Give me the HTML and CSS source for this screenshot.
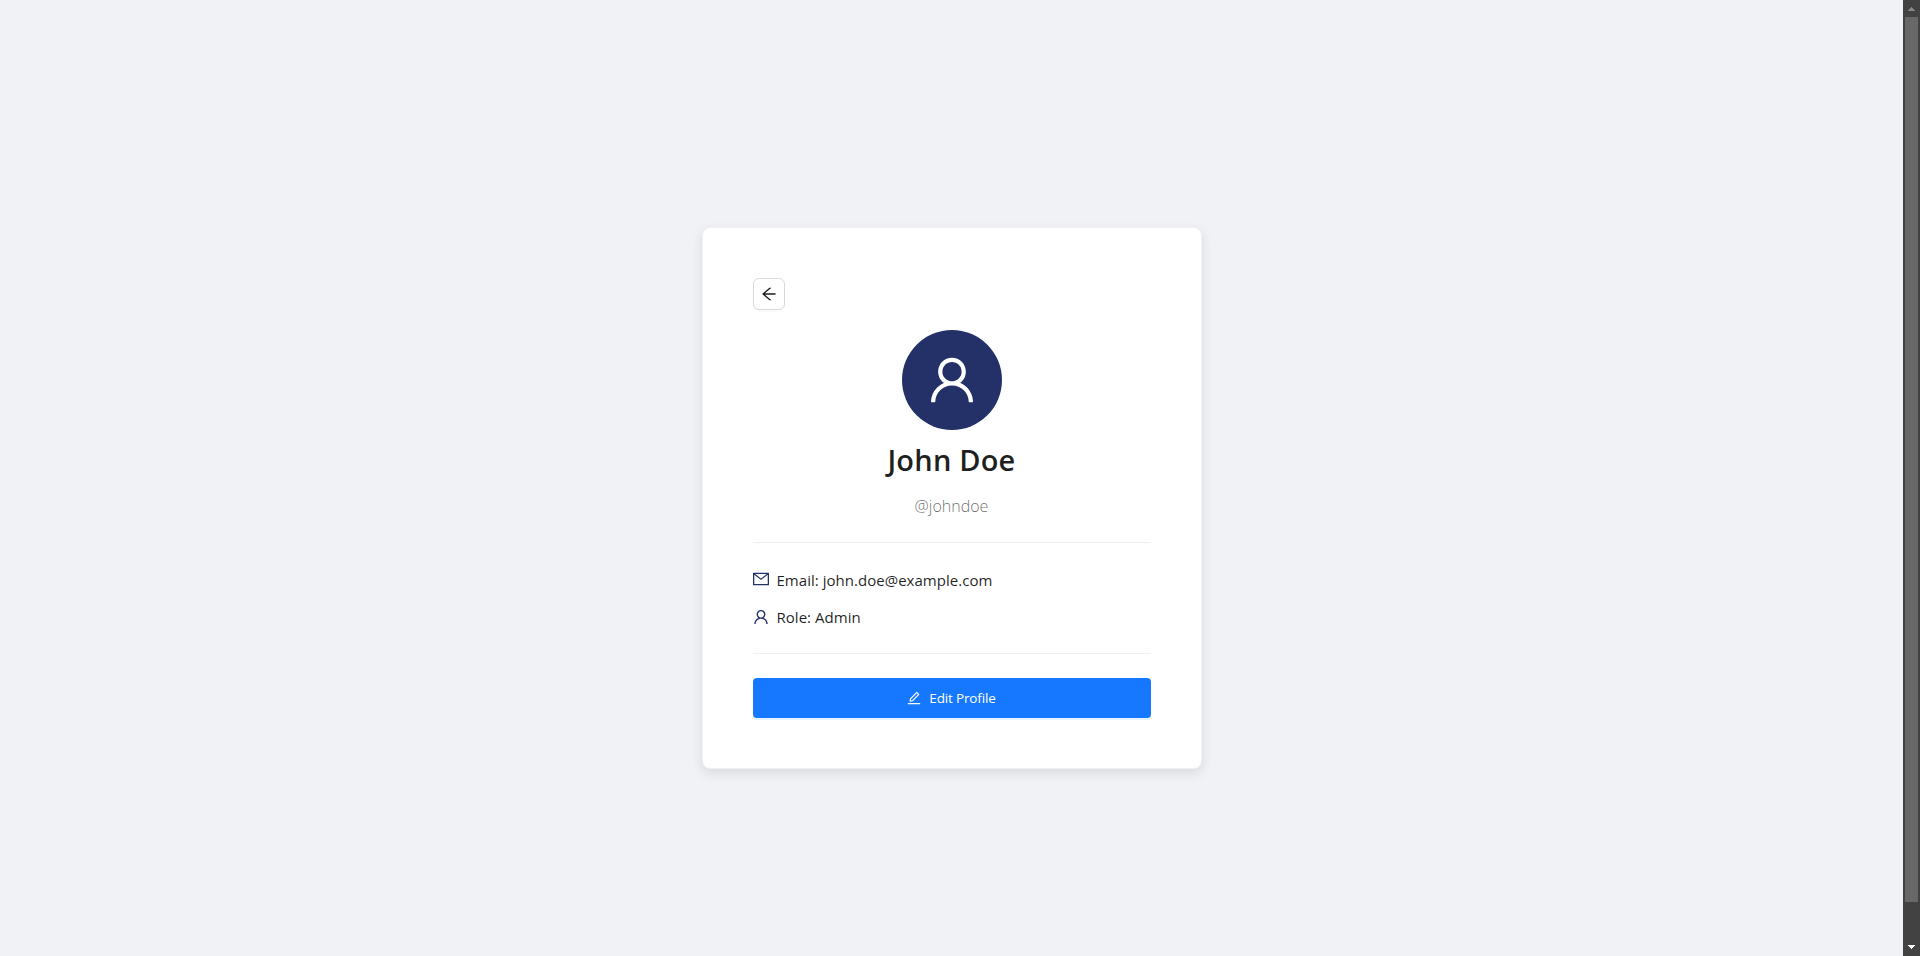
FILE: index.html
```html
<!DOCTYPE html>
<html lang="en">
<head>
<meta charset="utf-8">
<title>Profile</title>
<link rel="stylesheet" href="styles.css">
</head>
<body>
<svg class="sprite" aria-hidden="true">
  <symbol id="user" viewBox="64 64 896 896"><path d="M858.5 763.6a374 374 0 00-80.6-119.5 375.63 375.63 0 00-119.5-80.6c-.4-.2-.8-.3-1.2-.5C719.5 518 760 444.7 760 362c0-137-111-248-248-248S264 225 264 362c0 82.7 40.5 156 102.8 201.1-.4.2-.8.3-1.2.5-44.8 18.9-85 46-119.5 80.6a375.63 375.63 0 00-80.6 119.5A371.7 371.7 0 00136 901.8a8 8 0 008 8.2h60c4.4 0 7.9-3.5 8-7.8 2-77.2 33-149.5 87.8-204.3 56.7-56.7 132-87.9 212.2-87.9s155.5 31.2 212.2 87.9C779 752.7 810 825 812 902.2c.1 4.4 3.6 7.8 8 7.8h60a8 8 0 008-8.2c-1-47.8-10.9-94.3-29.5-138.2zM512 534c-45.9 0-89.1-17.9-121.6-50.4S340 407.9 340 362c0-45.9 17.9-89.1 50.4-121.6S466.1 190 512 190s89.1 17.9 121.6 50.4S684 316.1 684 362c0 45.9-17.9 89.1-50.4 121.6S557.9 534 512 534z"/></symbol>
</svg>
<div class="window">
  <main class="page">
    <section class="card">
      <button class="back" aria-label="Back">
        <svg class="icon" viewBox="64 64 896 896"><path d="M872 474H286.9l350.2-304c5.6-4.9 2.2-14-5.2-14h-88.5c-3.9 0-7.6 1.4-10.5 3.9L155 487.8a31.96 31.96 0 000 48.3L535.1 866c1.5 1.3 3.3 2 5.2 2h91.5c7.4 0 10.8-9.2 5.2-14L286.9 550H872c4.4 0 8-3.6 8-8v-60c0-4.4-3.6-8-8-8z"/></svg>
      </button>
      <div class="avatar"><svg class="avatar-icon"><use href="#user"/></svg></div>
      <h2 class="name">John Doe</h2>
      <span class="handle">@johndoe</span>
      <div class="details">
        <div class="row">
          <svg class="icon navy mail" viewBox="64 64 896 896"><path d="M928 160H96c-17.7 0-32 14.3-32 32v640c0 17.7 14.3 32 32 32h832c17.7 0 32-14.3 32-32V192c0-17.7-14.3-32-32-32zm-40 110.8V792H136V270.8l-27.6-21.5 39.3-50.5 42.8 33.3h643.1l42.8-33.3 39.3 50.5-27.7 21.5zM833.6 232L512 482 190.4 232l-42.8-33.3-39.3 50.5 27.6 21.5 341.6 265.6a55.99 55.99 0 0068.7 0L888 270.8l27.6-21.5-39.3-50.5-42.7 33.2z"/></svg>
          <span class="email">Email: john.doe@example.com</span>
        </div>
        <div class="row">
          <svg class="icon navy person"><use href="#user"/></svg>
          <span class="role">Role: Admin</span>
        </div>
      </div>
      <button class="edit">
        <svg class="edit-icon" viewBox="64 64 896 896"><path d="M257.7 752c2 0 4-.2 6-.5L431.9 722c2-.4 3.9-1.3 5.3-2.8l423.9-423.9a9.96 9.96 0 000-14.1L694.9 114.9c-1.9-1.9-4.4-2.9-7.1-2.9s-5.2 1-7.1 2.9L256.8 538.8c-1.5 1.5-2.4 3.3-2.8 5.3l-29.5 168.2a33.5 33.5 0 009.4 29.8c6.6 6.4 14.9 9.9 23.8 9.9zm67.4-174.4L687.8 215l73.3 73.3-362.7 362.6-88.9 15.7 15.6-89zM880 836H144c-17.7 0-32 14.3-32 32v36c0 4.4 3.6 8 8 8h784c4.4 0 8-3.6 8-8v-36c0-17.7-14.3-32-32-32z"/></svg>
        <span class="edit-label">Edit Profile</span>
      </button>
    </section>
  </main>
  <div class="scrollbar">
    <svg class="arrow dim" viewBox="0 0 7 4"><path d="M3 0h1v1h1v1h1v1h1v1H0V3h1V2h1V1h1z"/></svg>
    <div class="thumb"></div>
    <svg class="arrow" viewBox="0 0 7 4"><path d="M0 0h7v1H6v1H5v1H4v1H3V3H2V2H1V1H0z"/></svg>
  </div>
</div>
</body>
</html>
```
FILE: styles.css
```css
* { box-sizing: border-box; }
body {
  margin: 0;
  font-family: "Open Sans", "Noto Sans", sans-serif;
  color: rgba(0, 0, 0, 0.88);
  overflow: hidden;
}
.sprite { display: none; }
.window { display: flex; height: 956px; }
.page {
  flex: 1;
  display: flex;
  justify-content: center;
  align-items: flex-start;
  padding-top: 227px;
  background: #f0f2f5;
}
.card {
  width: 500px;
  height: 542px;
  padding: 50px;
  display: flex;
  flex-direction: column;
  align-items: center;
  background: #fff;
  border: 1px solid #f0f0f0;
  border-radius: 8px;
  box-shadow: 0 4px 12px rgba(0, 0, 0, 0.1);
}
.icon { width: 16px; height: 16px; flex: none; fill: currentColor; }
.navy { color: #243168; }
.mail { margin-bottom: 3px; }
.person { margin-bottom: 1px; }
.back {
  align-self: flex-start;
  width: 32px;
  height: 32px;
  padding: 0;
  display: flex;
  align-items: center;
  justify-content: center;
  color: rgba(0, 0, 0, 0.88);
  background: #fff;
  border: 1px solid #d9d9d9;
  border-radius: 6px;
  box-shadow: 0 2px 0 rgba(0, 0, 0, 0.02);
}
.avatar {
  width: 100px;
  height: 100px;
  margin-top: 20px;
  display: flex;
  align-items: center;
  justify-content: center;
  border-radius: 50%;
  background: #243168;
}
.avatar-icon { width: 50px; height: 50px; fill: #fff; }
.name {
  margin: 10px 0 0;
  font-size: 29px;
  line-height: 40px;
  font-weight: 600;
  letter-spacing: 0.2px;
}
.handle {
  margin-top: 14px;
  font-size: 16px;
  line-height: 25px;
  font-weight: 300;
  color: rgba(0, 0, 0, 0.6);
}
.details {
  align-self: stretch;
  height: 112px;
  margin-top: 23px;
  padding-top: 25px;
  display: flex;
  flex-direction: column;
  gap: 12px;
  border-top: 1px solid #f0f0f0;
  border-bottom: 1px solid #f0f0f0;
}
.row {
  display: flex;
  align-items: center;
  gap: 8px;
  height: 25px;
  font-size: 15px;
  letter-spacing: 0.03px;
  line-height: 25px;
  white-space: nowrap;
}
.edit {
  align-self: stretch;
  height: 40px;
  margin-top: 24px;
  padding: 0;
  display: flex;
  align-items: center;
  justify-content: center;
  gap: 8px;
  border: 0;
  border-radius: 4px;
  background: #1677ff;
  color: #fff;
  font-family: inherit;
  font-size: 13.5px;
  letter-spacing: -0.15px;
  box-shadow: 0 2px 0 rgba(5, 145, 255, 0.1);
}
.edit-icon { width: 14px; height: 14px; fill: #fff; }
.scrollbar {
  width: 17px;
  padding: 7px 0 6px;
  display: flex;
  flex-direction: column;
  align-items: center;
  background: #424242;
}
.thumb { width: 13px; height: 885px; margin: 6px 0 43px; background: #686868; }
.arrow { width: 7px; height: 4px; flex: none; fill: #fff; shape-rendering: crispEdges; }
.dim { fill: #868686; }
```
